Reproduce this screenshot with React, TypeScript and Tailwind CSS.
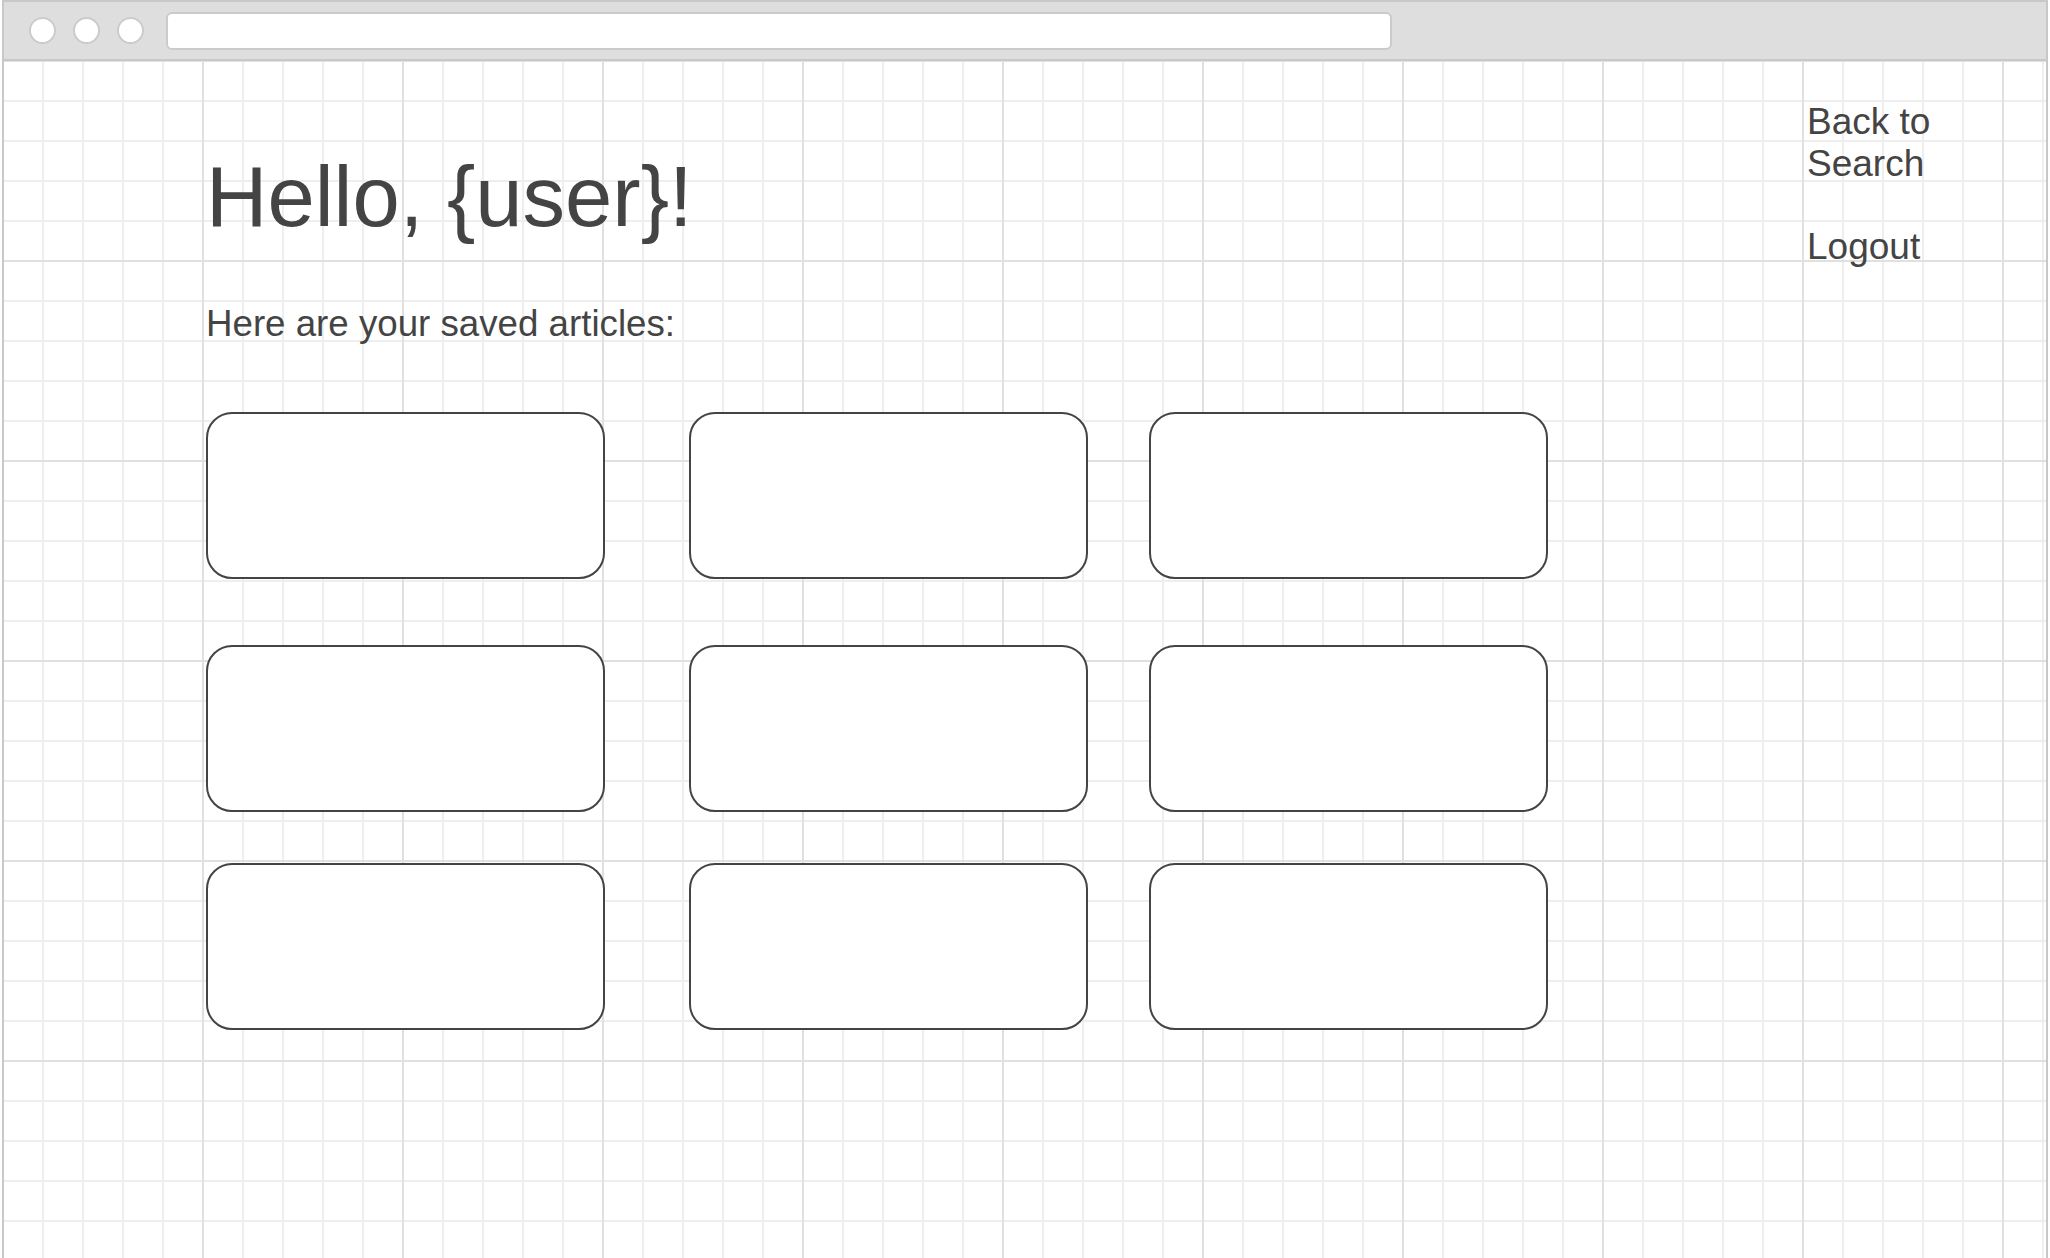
import React from 'react';

const rowGaps = ['', 'mt-[66px]', 'mt-[51px]'];
const colGaps = ['', 'ml-[84px]', 'ml-[61px]'];

const App: React.FC = () => {
    return (
        <div className="w-[2050px] h-[1258px] overflow-hidden bg-white px-[2px] font-['Liberation_Sans',Arial,sans-serif] leading-[normal] text-[#444444]">
            <div className="flex h-[1300px] flex-col border-2 border-b-0 border-[#c8c8c8]">
                {/* Browser chrome */}
                <div className="flex h-[59px] shrink-0 items-center border-b-2 border-[#c8c8c8] bg-[#dedede] pl-[25px]">
                    <div className="flex gap-[17px]">
                        {[0, 1, 2].map(i => (
                            <span key={i} className="h-[27px] w-[27px] rounded-full border-2 border-[#cbcbcb] bg-white" />
                        ))}
                    </div>
                    <div className="ml-[22px] h-[38px] w-[1226px] rounded-[6px] border-2 border-[#cbcbcb] bg-white" />
                </div>

                {/* Page */}
                <div className="flex flex-1 bg-white bg-[linear-gradient(to_right,#e0e0e0_2px,transparent_2px),linear-gradient(to_bottom,#e0e0e0_2px,transparent_2px),linear-gradient(to_right,#eeeeee_2px,transparent_2px),linear-gradient(to_bottom,#eeeeee_2px,transparent_2px)] bg-[size:200px_200px,200px_200px,40px_40px,40px_40px] bg-[position:-2px_-1px]">
                    <main className="flex-1 pl-[202px] pt-[87px]">
                        <h1 className="text-[85px] font-normal leading-[normal]">Hello, {'{user}'}!</h1>
                        <p className="mt-[57px] text-[36.7px] leading-[normal]">Here are your saved articles:</p>

                        <div className="mt-[67px] flex flex-col">
                            {rowGaps.map((rowGap, r) => (
                                <div key={r} className={`flex ${rowGap}`}>
                                    {colGaps.map((colGap, c) => (
                                        <div
                                            key={c}
                                            className={`h-[167px] w-[399px] rounded-[26px] border-2 border-[#444444] bg-white ${colGap}`}
                                        />
                                    ))}
                                </div>
                            ))}
                        </div>
                    </main>

                    <aside className="w-[240px] shrink-0 pl-[1px] pt-[40px] text-[37px] leading-[normal]">
                        <a href="#" className="block w-[180px]">Back to Search</a>
                        <a href="#" className="mt-[41px] block">Logout</a>
                    </aside>
                </div>
            </div>
        </div>
    );
};

export default App;
